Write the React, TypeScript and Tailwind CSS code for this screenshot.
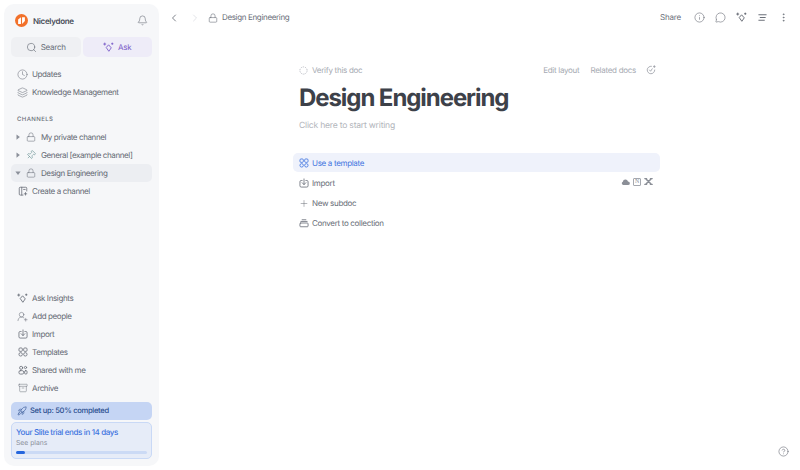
import React from "react";
import { Search, Bell, Clock, Layers, Lock, ChevronLeft, ChevronRight, Info, MessageCircle, Plus, UserRoundPlus, Archive, Rocket, CircleHelp, EllipsisVertical, Pin } from "lucide-react";

const Sparkle = ({ size = 12, className = "" }: { size?: number; className?: string }) => (
  <svg width={size} height={size} viewBox="0 0 16 16" fill="none" stroke="currentColor" strokeWidth="1.300" className={className} strokeLinejoin="round" strokeLinecap="round">
    <path d="M8.500 4.500 L12 8.500 L8.500 13.500 L5 8.500 Z" />
    <path d="M2.500 1.500v3M1 3h3M13.500 1.500v2M12.500 2.500h2" />
  </svg>
);
const Templates = ({ size = 12, className = "" }: { size?: number; className?: string }) => (
  <svg width={size} height={size} viewBox="0 0 16 16" fill="none" stroke="currentColor" strokeWidth="1.300" className={className}>
    <rect x="1.500" y="1.500" width="5.500" height="5.500" rx="1.800" />
    <rect x="9" y="1.500" width="5.500" height="5.500" rx="1.800" />
    <circle cx="4.250" cy="11.750" r="2.750" />
    <circle cx="11.750" cy="11.750" r="2.750" />
  </svg>
);
const ImportIcon = ({ size = 12, className = "" }: { size?: number; className?: string }) => (
  <svg width={size} height={size} viewBox="0 0 16 16" fill="none" stroke="currentColor" strokeWidth="1.300" strokeLinecap="round" strokeLinejoin="round" className={className}>
    <path d="M5 4H3.500A2 2 0 0 0 1.500 6V12.500A2 2 0 0 0 3.500 14.500H12.500A2 2 0 0 0 14.500 12.500V6A2 2 0 0 0 12.500 4H11" />
    <path d="M8 1.500V10.500M5 7.500L8 10.500L11 7.500" />
  </svg>
);
const Collection = ({ size = 12, className = "" }: { size?: number; className?: string }) => (
  <svg width={size} height={size} viewBox="0 0 16 16" fill="none" stroke="currentColor" strokeWidth="1.300" strokeLinecap="round" className={className}>
    <rect x="1.500" y="8" width="13" height="6" rx="1.200" />
    <path d="M3 5.500H13M5 2.800H11" />
  </svg>
);
const CreateChannel = ({ size = 12, className = "" }: { size?: number; className?: string }) => (
  <svg width={size} height={size} viewBox="0 0 16 16" fill="none" stroke="currentColor" strokeWidth="1.300" strokeLinecap="round" strokeLinejoin="round" className={className}>
    <path d="M8 14.500H3.500A1.500 1.500 0 0 1 2 13V3.500A1.500 1.500 0 0 1 3.500 2H12.500A1.500 1.500 0 0 1 14 3.500V8" />
    <path d="M6 2V14.500M9 5.500H11.500M12 10.500V14.500M10 12.500H14" />
  </svg>
);
const Shared = ({ size = 12, className = "" }: { size?: number; className?: string }) => (
  <svg width={size} height={size} viewBox="0 0 16 16" fill="none" stroke="currentColor" strokeWidth="1.300" strokeLinecap="round" strokeLinejoin="round" className={className}>
    <circle cx="5" cy="4.500" r="2.500" />
    <circle cx="12" cy="4" r="1.800" />
    <rect x="1.500" y="9" width="7.500" height="5.500" rx="2.200" />
    <rect x="10.500" y="9" width="4" height="5.500" rx="1.800" />
  </svg>
);
const Shuffle = () => (
  <svg width="9" height="9" viewBox="0 0 10 10" fill="none" stroke="currentColor" strokeLinecap="round">
    <path d="M2.500 2.500L7.500 7.500M7.500 2.500L2.500 7.500" strokeWidth="1.700" />
    <path d="M.8 1.800H3M7 1.800H9.200M.8 8.200H3M7 8.200H9.200" strokeWidth="1.200" />
  </svg>
);
const Caret = ({ open = false }: { open?: boolean }) => (
  <svg width="6" height="6" viewBox="0 0 8 8" className="text-[#8b909a]" fill="currentColor">
    {open ? <path d="M.5 2H7.500L4 6.500Z" /> : <path d="M2 .5L6.500 4L2 7.500Z" />}
  </svg>
);

const Row = ({ icon, label }: { icon: React.ReactNode; label: string }) => (
  <div className="flex h-[18px] items-center pl-[3px] text-[8px] tracking-[-0.38px] text-[#646973]">
    <span className="flex w-[17px] justify-center text-[#6b707a]">{icon}</span>
    <span className="ml-[1px]">{label}</span>
  </div>
);

const Channel = ({ icon, label, active, open }: { icon: React.ReactNode; label: string; active?: boolean; open?: boolean }) => (
  <div className={`flex h-[18px] items-center rounded-[5px] pl-[4px] text-[8px] tracking-[-0.4px] text-[#646973] ${active ? "bg-[#eceef2]" : ""}`}>
    <span className="flex w-[6px] justify-center"><Caret open={open} /></span>
    <span className="ml-[3px] flex w-[13px] justify-center text-[#6b707a]">{icon}</span>
    <span className="ml-[4px]">{label}</span>
  </div>
);

const Action = ({ icon, label, active, right }: { icon: React.ReactNode; label: string; active?: boolean; right?: React.ReactNode }) => (
  <div className={`flex h-[19px] items-center gap-[3px] rounded-[5px] pl-[6px] pr-[7px] text-[8px] tracking-[-0.32px] ${active ? "bg-[#eff2fb] text-[#3f74e0]" : "text-[#686d77]"}`}>
    <span className="flex w-[10px] justify-center">{icon}</span>
    <span>{label}</span>
    {right}
  </div>
);

export default function App() {
  return (
    <div className="flex h-[470px] w-[800px] overflow-hidden bg-white font-['Inter',sans-serif] [text-rendering:geometricPrecision]">
      <aside className="m-[4px] flex w-[155px] shrink-0 flex-col rounded-[10px] bg-[#f6f7f9] px-[7px] pb-[7px]">
        <div className="flex h-[33px] shrink-0 items-center justify-between pl-[4px] pr-[4px]">
          <div className="flex items-center gap-[5px]">
            <div className="flex h-[13px] w-[13px] items-center justify-center rounded-full bg-[#f2712b]">
              <svg width="9" height="9" viewBox="0 0 8 8" fill="white"><path d="M1 3.200L3.500 1V7H1ZM4.500 1H7V4.500L4.500 7Z" /></svg>
            </div>
            <span className="text-[8px] font-semibold tracking-[-0.3px] text-[#4a4f59]">Nicelydone</span>
          </div>
          <Bell size={11} strokeWidth={1.3} className="text-[#6b707a]" />
        </div>
        <div className="flex shrink-0 gap-[2px]">
          <div className="flex h-[20px] flex-1 items-center justify-center gap-[4px] rounded-[5px] bg-[#eff0f3] text-[8px] tracking-[-0.25px] text-[#686d77]">
            <Search size={11} strokeWidth={1.4} /> Search
          </div>
          <div className="flex h-[20px] flex-1 items-center justify-center gap-[4px] rounded-[5px] bg-[#eeecf8] text-[8px] tracking-[-0.2px] text-[#7a5cc8]">
            <Sparkle size={11} /> Ask
          </div>
        </div>
        <div className="mt-[8px] shrink-0">
          <Row icon={<Clock size={11} strokeWidth={1.2} />} label="Updates" />
          <Row icon={<Layers size={11} strokeWidth={1.2} />} label="Knowledge Management" />
        </div>
        <div className="mt-[10px] flex h-[16px] shrink-0 items-center pl-[6px] text-[6px] font-medium tracking-[0.4px] text-[#6b707a]">CHANNELS</div>
        <div className="mt-[1px] shrink-0">
          <Channel icon={<Lock size={10} strokeWidth={1.3} />} label="My private channel" />
          <Channel icon={<Pin size={10} strokeWidth={1.3} className="rotate-45 text-[#5f8a8b]" />} label="General [example channel]" />
          <Channel icon={<Lock size={10} strokeWidth={1.3} />} label="Design Engineering" active open />
          <Row icon={<CreateChannel size={10} />} label="Create a channel" />
        </div>
        <div className="flex-1" />
        <div className="shrink-0">
          <Row icon={<Sparkle size={11} />} label="Ask Insights" />
          <Row icon={<UserRoundPlus size={11} strokeWidth={1.2} />} label="Add people" />
          <Row icon={<ImportIcon size={10} />} label="Import" />
          <Row icon={<Templates size={10} />} label="Templates" />
          <Row icon={<Shared size={10} />} label="Shared with me" />
          <Row icon={<Archive size={10} strokeWidth={1.2} />} label="Archive" />
        </div>
        <div className="mt-[5px] flex h-[18px] shrink-0 items-center gap-[3px] rounded-[5px] bg-[#c5d5f4] pl-[6px] text-[7.600px] font-medium tracking-[-0.3px] text-[#2c4f8f]">
          <Rocket size={10} strokeWidth={1.4} /> Set up: 50% completed
        </div>
        <div className="mt-[2px] flex h-[37px] shrink-0 flex-col rounded-[5px] border border-[#c9d9f6] bg-[#e6ecf8] px-[4px] pt-[3px]">
          <div className="text-[8px] font-medium leading-[12px] tracking-[-0.37px] text-[#3f74e0]">Your Slite trial ends in 14 days</div>
          <div className="text-[6.800px] leading-[10px] text-[#8b909a]">See plans</div>
          <div className="mt-[3px] h-[3px] rounded-full bg-[#cbdaf5]">
            <div className="h-[3px] w-[9px] rounded-full bg-[#2566dd]" />
          </div>
        </div>
      </aside>

      <main className="flex min-w-0 flex-1 flex-col">
        <header className="flex h-[35px] shrink-0 items-center pl-[5px] pr-[11px]">
          <ChevronLeft size={12} strokeWidth={1.6} className="text-[#5d626c]" />
          <ChevronRight size={12} strokeWidth={1.3} className="ml-[9px] text-[#d4d6db]" />
          <Lock size={10} strokeWidth={1.4} className="ml-[7px] text-[#6b707a]" />
          <span className="mb-[1px] ml-[4px] text-[8px] tracking-[-0.35px] text-[#6b707a]">Design Engineering</span>
          <div className="ml-auto flex items-center text-[#5d626c]">
            <span className="mb-[1px] text-[8px] tracking-[-0.2px] text-[#6b707a]">Share</span>
            <Info size={11} strokeWidth={1.2} className="ml-[13px]" />
            <MessageCircle size={11} strokeWidth={1.2} className="ml-[10px]" />
            <Sparkle size={11} className="ml-[10px]" />
            <svg width="11" height="11" viewBox="0 0 12 12" stroke="currentColor" strokeWidth="1" strokeLinecap="round" className="ml-[10px]"><path d="M2 3H10M3.500 6H9M2 9H8" /></svg>
            <EllipsisVertical size={11} strokeWidth={1.4} className="ml-[10px]" />
          </div>
        </header>

        <div className="ml-[130px] w-[367px]">
          <div className="mt-[28px] flex h-[14px] items-center pl-[6px] pr-[3px] text-[8px] tracking-[-0.28px] text-[#a6aab2]">
            <svg width="9" height="9" viewBox="0 0 10 10" fill="none" stroke="#b4b7be" strokeWidth="1" strokeDasharray="1.400 1.100"><circle cx="5" cy="5" r="4" /></svg>
            <span className="ml-[4px]">Verify this doc</span>
            <span className="ml-auto">Edit layout</span>
            <span className="ml-[11px]">Related docs</span>
            <svg width="10" height="10" viewBox="0 0 12 12" fill="none" stroke="#9a9ea6" strokeWidth="1" strokeLinecap="round" strokeLinejoin="round" className="ml-[10px] mr-[1px]"><path d="M10.500 6A4.500 4.500 0 1 1 6.500 1.500" /><path d="M4.200 6L5.500 7.500L7.500 4.500" /><path d="M10 .8V3M9 1.900H11" /></svg>
          </div>
          <h1 className="mt-[1px] pl-[6px] text-[24px] font-bold leading-[40px] tracking-[-1.070px] text-[#3d4149]">Design Engineering</h1>
          <div className="mt-[1px] pl-[6px] text-[8.600px] leading-[14px] tracking-[-0.22px] text-[#b3b6bc]">Click here to start writing</div>
          <div className="mt-[20px] flex flex-col gap-[1.300px]">
            <Action icon={<Templates size={10} />} label="Use a template" active />
            <Action
              icon={<ImportIcon size={10} />}
              label="Import"
              right={
                <div className="ml-auto flex -translate-y-[1px] items-center gap-[3px] text-[#8b8f97]">
                  <svg width="9" height="8" viewBox="0 0 10 9" fill="currentColor"><path d="M2.500 8A2 2 0 0 1 2 4.200 3 3 0 0 1 7.800 3.800 2.100 2.100 0 0 1 7.800 8Z" /></svg>
                  <span className="flex h-[8px] w-[8px] items-center justify-center rounded-[1px] border border-[#a5a8af] font-['Liberation_Serif',serif] text-[6px] leading-none">N</span>
                  <Shuffle />
                </div>
              }
            />
            <Action icon={<Plus size={11} strokeWidth={1.2} />} label="New subdoc" />
            <Action icon={<Collection size={10} />} label="Convert to collection" />
          </div>
        </div>
        <div className="mt-auto flex justify-end pb-[13px] pr-[11px]">
          <CircleHelp size={11} strokeWidth={1.2} className="text-[#5d626c]" />
        </div>
      </main>
    </div>
  );
}
